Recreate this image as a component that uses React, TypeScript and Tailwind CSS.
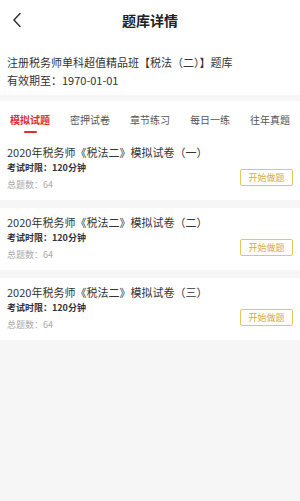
import React from "react";

const exams = [
  "2020年税务师《税法二》模拟试卷（一）",
  "2020年税务师《税法二》模拟试卷（二）",
  "2020年税务师《税法二》模拟试卷（三）",
];

const tabs = ["模拟试题", "密押试卷", "章节练习", "每日一练", "往年真题"];

export default function App() {
  return (
    <div
      className="w-[300px] h-[501px] bg-[#f6f6f6] overflow-hidden flex flex-col"
      style={{ fontFamily: '"Noto Sans CJK SC", "Noto Sans", sans-serif' }}
    >
      <div className="h-[40px] bg-white flex items-center relative shrink-0">
        <div className="pl-[12px] flex items-center">
          <svg width="10" height="16" viewBox="0 0 10 16" fill="none">
            <path d="M8 1.5 L2 8 L8 14.5" stroke="#333" strokeWidth="1.5" strokeLinecap="round" strokeLinejoin="round" />
          </svg>
        </div>
        <div className="absolute inset-0 flex items-center justify-center text-[14px] font-semibold text-[#222] leading-none">
          题库详情
        </div>
      </div>
      <div className="bg-white px-[7px] pt-[13px] pb-[6px] text-[11px] text-[#333] leading-[18px]">
        <div>注册税务师单科超值精品班【税法（二）】题库</div>
        <div>有效期至：1970-01-01</div>
      </div>
      <div className="h-[6px] shrink-0" />
      <div className="bg-white h-[37px] grid grid-cols-5 shrink-0">
        {tabs.map((t, i) => (
          <div key={t} className="flex flex-col items-center pt-[12px]">
            <span className={`text-[10px] leading-[14px] ${i === 0 ? "text-[#e02c2c] font-bold" : "text-[#555]"}`}>{t}</span>
            {i === 0 && <div className="mt-[4px] w-[13px] h-[2px] bg-[#e02c2c] rounded-full" />}
          </div>
        ))}
      </div>
      <div className="flex flex-col gap-[8px]">
        {exams.map((e) => (
          <div key={e} className="bg-white h-[62px] px-[7px] pt-[6px] flex justify-between">
            <div className="flex flex-col">
              <div className="text-[11px] leading-[16px] text-[#333]">{e}</div>
              <div className="text-[9px] leading-[16px] text-[#333] font-semibold">考试时限：120分钟</div>
              <div className="text-[9px] leading-[17px] text-[#aaa]">总题数：64</div>
            </div>
            <div className="flex items-end pb-[14px]">
              <div className="w-[53px] h-[17px] border border-[#e6c75e] rounded-[2px] flex items-center justify-center text-[9px] text-[#d4ac3c] leading-none">
                开始做题
              </div>
            </div>
          </div>
        ))}
      </div>
    </div>
  );
}
